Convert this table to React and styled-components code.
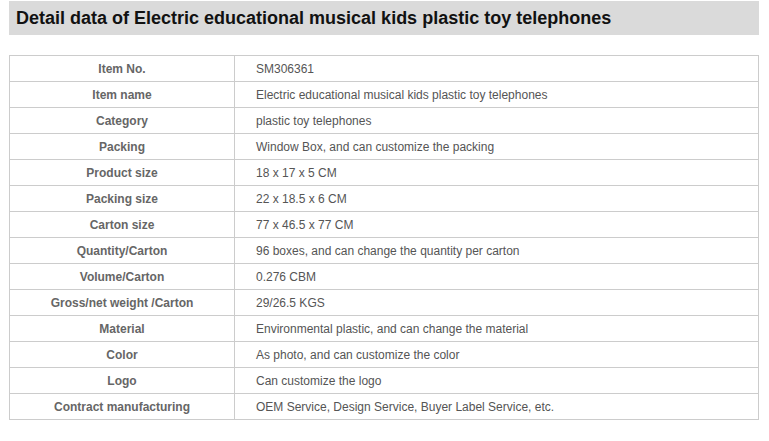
import React from 'react';
import styled, { createGlobalStyle } from 'styled-components';

const GlobalStyle = createGlobalStyle`
  body {
    margin: 0;
    background: #fff;
    font-family: "Liberation Sans", Arial, sans-serif;
  }
`;

const DetailStyles = styled.div`
  padding: 1px 10px 0 9px;
  width: 750px;
`;

const Heading = styled.h2`
  margin: 0;
  height: 34px;
  padding-left: 7px;
  background: #dadada;
  color: #111;
  font-size: 18px;
  font-weight: bold;
  line-height: 34px;
`;

const Table = styled.table`
  margin-top: 20px;
  width: 750px;
  border-collapse: collapse;
  table-layout: fixed;
  font-size: 12px;
`;

const Row = styled.tr`
  height: 26px;
`;

const Cell = styled.td`
  border: 1px solid #ccc;
  padding: 0 0 0 ${(p) => (p.$label ? '0' : '21px')};
  width: ${(p) => (p.$label ? '224px' : 'auto')};
  text-align: ${(p) => (p.$label ? 'center' : 'left')};
  font-weight: ${(p) => (p.$label ? 'bold' : 'normal')};
  color: ${(p) => (p.$label ? '#666' : '#555')};
  vertical-align: middle;
`;

const rows = [
  ['Item No.', 'SM306361'],
  ['Item name', 'Electric educational musical kids plastic toy telephones'],
  ['Category', 'plastic toy telephones'],
  ['Packing', 'Window Box, and can customize the packing'],
  ['Product size', '18 x 17 x 5 CM'],
  ['Packing size', '22 x 18.5 x 6 CM'],
  ['Carton size', '77 x 46.5 x 77 CM'],
  ['Quantity/Carton', '96 boxes, and can change the quantity per carton'],
  ['Volume/Carton', '0.276 CBM'],
  ['Gross/net weight /Carton', '29/26.5 KGS'],
  ['Material', 'Environmental plastic, and can change the material'],
  ['Color', 'As photo, and can customize the color'],
  ['Logo', 'Can customize the logo'],
  ['Contract manufacturing', 'OEM Service, Design Service, Buyer Label Service, etc.'],
];

function App() {
  return (
    <>
      <GlobalStyle />
      <DetailStyles>
        <Heading>Detail data of Electric educational musical kids plastic toy telephones</Heading>
        <Table>
          <tbody>
            {rows.map(([label, value]) => (
              <Row key={label}>
                <Cell $label>{label}</Cell>
                <Cell>{value}</Cell>
              </Row>
            ))}
          </tbody>
        </Table>
      </DetailStyles>
    </>
  );
}

export default App;
